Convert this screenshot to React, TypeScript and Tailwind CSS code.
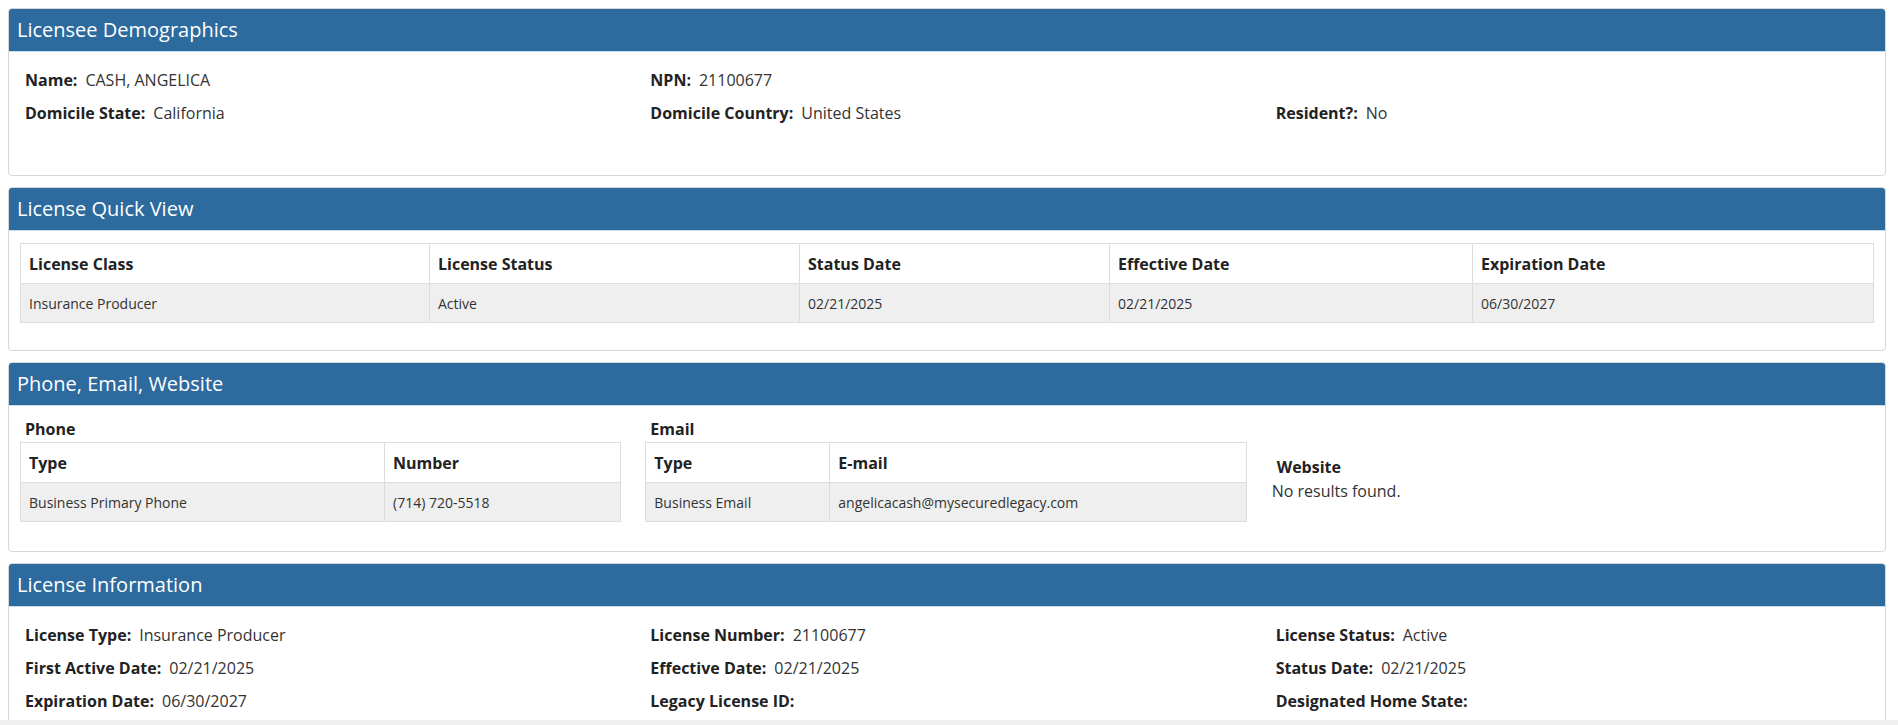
import React from "react";

const font = { fontFamily: '"Open Sans", "Liberation Sans", sans-serif' };

function Panel({ title, children }: { title: string; children: React.ReactNode }) {
  return (
    <div className="mb-[11px] rounded-[4px] border border-[#d6d6d6] bg-white overflow-hidden">
      <div className="flex h-[43px] items-center border-b border-[#c5dcef] bg-[#2d6a9e] pl-[8px] text-[20px] text-white">
        {title}
      </div>
      {children}
    </div>
  );
}

function Field({ label, value }: { label: string; value?: string }) {
  return (
    <div className="flex h-[33px] items-center pl-[16px] text-[16px]">
      <span className="font-bold text-[#222]">{label}</span>
      {value ? <span className="ml-[8px] text-[#333]">{value}</span> : null}
    </div>
  );
}

function Table({
  cols,
  widths,
  row,
}: {
  cols: string[];
  widths: string[];
  row: string[];
}) {
  return (
    <table className="w-full border-collapse border border-[#dddddd] text-left">
      <thead>
        <tr className="h-[40px] bg-white">
          {cols.map((c, i) => (
            <th
              key={c}
              className={`border border-[#dddddd] px-[8px] text-[16px] font-bold text-[#222] ${widths[i]}`}
            >
              {c}
            </th>
          ))}
        </tr>
      </thead>
      <tbody>
        <tr className="h-[39px] bg-[#eeefee]">
          {row.map((c, i) => (
            <td key={i} className="border border-[#dddddd] px-[8px] text-[14px] text-[#333]">
              {c}
            </td>
          ))}
        </tr>
      </tbody>
    </table>
  );
}

export default function App() {
  return (
    <div className="min-h-screen bg-white pl-[8px] pr-[12px] pt-[8px]" style={font}>
      <Panel title="Licensee Demographics">
        <div className="grid grid-cols-3 pt-[11px] pb-[13px]">
          <Field label="Name:" value="CASH, ANGELICA" />
          <Field label="NPN:" value="21100677" />
          <div />
          <Field label="Domicile State:" value="California" />
          <Field label="Domicile Country:" value="United States" />
          <Field label="Resident?:" value="No" />
          <div className="h-[33px]" />
        </div>
      </Panel>

      <Panel title="License Quick View">
        <div className="px-[11px] pt-[12px] pb-[27px]">
          <Table
            cols={["License Class", "License Status", "Status Date", "Effective Date", "Expiration Date"]}
            widths={["w-[409px]", "w-[370px]", "w-[310px]", "w-[363px]", ""]}
            row={["Insurance Producer", "Active", "02/21/2025", "02/21/2025", "06/30/2027"]}
          />
        </div>
      </Panel>

      <Panel title="Phone, Email, Website">
        <div className="grid grid-cols-3 pt-[13px] pb-[29px]">
          <div className="pl-[11px] pr-[13px]">
            <div className="h-[20px] pl-[5px] text-[16px] font-bold leading-[20px] text-[#222]">Phone</div>
            <div className="mt-[3px]">
              <Table
                cols={["Type", "Number"]}
                widths={["w-[364px]", ""]}
                row={["Business Primary Phone", "(714) 720-5518"]}
              />
            </div>
          </div>
          <div className="pl-[11px] pr-[13px]">
            <div className="h-[20px] pl-[5px] text-[16px] font-bold leading-[20px] text-[#222]">Email</div>
            <div className="mt-[3px]">
              <Table
                cols={["Type", "E-mail"]}
                widths={["w-[184px]", ""]}
                row={["Business Email", "angelicacash@mysecuredlegacy.com"]}
              />
            </div>
          </div>
          <div className="pl-[12px] pt-[37px]">
            <div className="h-[22px] pl-[5px] text-[16px] font-bold leading-[22px] text-[#222]">Website</div>
            <div className="h-[26px] text-[16px] leading-[26px] text-[#333]">No results found.</div>
          </div>
        </div>
      </Panel>

      <Panel title="License Information">
        <div className="grid grid-cols-3 pt-[11px] pb-[13px]">
          <Field label="License Type:" value="Insurance Producer" />
          <Field label="License Number:" value="21100677" />
          <Field label="License Status:" value="Active" />
          <Field label="First Active Date:" value="02/21/2025" />
          <Field label="Effective Date:" value="02/21/2025" />
          <Field label="Status Date:" value="02/21/2025" />
          <Field label="Expiration Date:" value="06/30/2027" />
          <Field label="Legacy License ID:" />
          <Field label="Designated Home State:" />
        </div>
      </Panel>

      <div className="fixed bottom-0 left-0 right-0 h-[5px] bg-[#f0f0f0]" />
    </div>
  );
}
